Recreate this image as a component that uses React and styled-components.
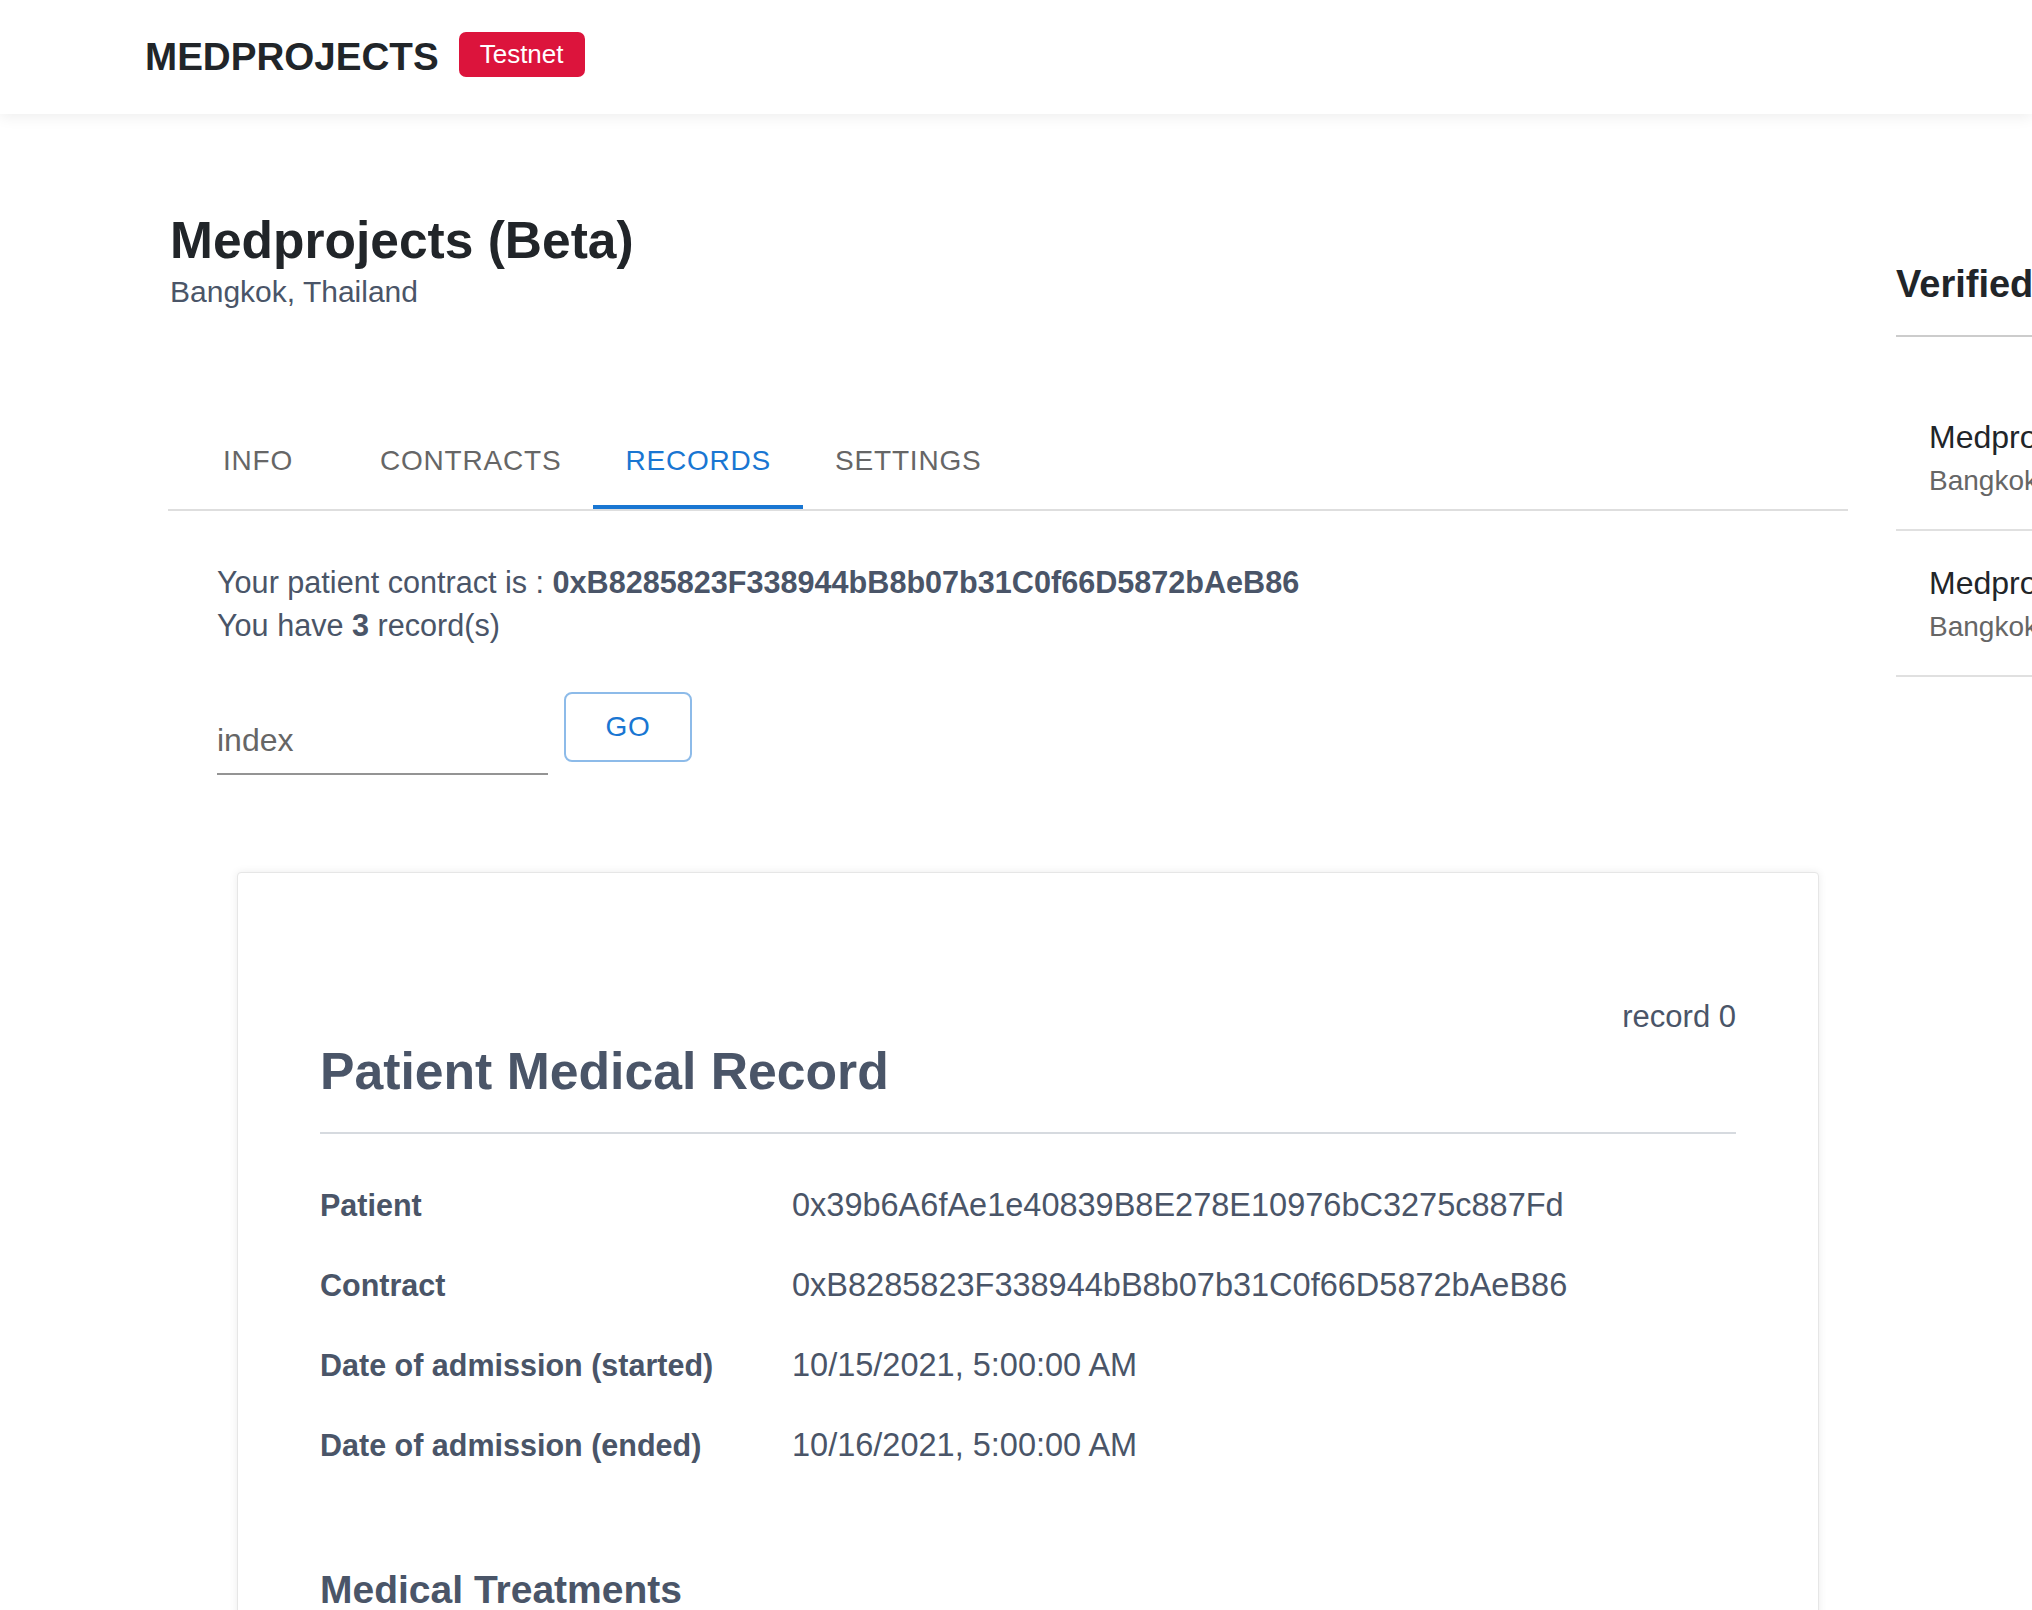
import React from "react";
import styled, { createGlobalStyle } from "styled-components";

const GlobalStyle = createGlobalStyle`
  html, body {
    margin: 0;
    padding: 0;
    background: #ffffff;
    overflow-x: hidden;
  }
  body {
    font-family: "Liberation Sans", Arial, Helvetica, sans-serif;
    color: #212529;
  }
  * { box-sizing: border-box; }
`;

const Header = styled.header`
  height: 114px;
  display: flex;
  align-items: center;
  gap: 20px;
  padding-left: 145px;
  background: #fff;
  box-shadow: 0 3px 14px rgba(0, 0, 0, 0.07);
  position: relative;
  z-index: 2;
`;

const Logo = styled.div`
  font-size: 38.6px;
  font-weight: 700;
  color: #212529;
  line-height: 1;
`;

const Badge = styled.span`
  display: inline-flex;
  align-items: center;
  height: 45px;
  margin-top: -6px;
  padding: 0 21px;
  border-radius: 7px;
  background: #dc143c;
  color: #fff;
  font-size: 26px;
  line-height: 1;
`;

const Main = styled.div`
  display: flex;
  gap: 48px;
  padding-left: 168px;
  width: max-content;
`;

const LeftColumn = styled.div`
  width: 1680px;
  flex-shrink: 0;
`;

const TitleBlock = styled.div`
  margin-top: 96px;
  padding-left: 2px;
`;

const Title = styled.h1`
  margin: 0;
  font-size: 51.5px;
  line-height: 60px;
  font-weight: 700;
  color: #212529;
`;

const Subtitle = styled.div`
  font-size: 30px;
  line-height: 43px;
  color: #4a5568;
`;

const TabBar = styled.div`
  margin-top: 100px;
  display: flex;
  border-bottom: 2px solid #dedede;
`;

const Tab = styled.div`
  position: relative;
  min-width: 180px;
  height: 96px;
  padding: 0 32px;
  display: flex;
  align-items: center;
  justify-content: center;
  font-size: 28px;
  letter-spacing: 0.8px;
  text-transform: uppercase;
  color: ${(p) => (p.$active ? "#1976d2" : "#666666")};

  &::after {
    content: "";
    position: absolute;
    left: 0;
    right: 0;
    bottom: 0;
    height: 4px;
    background: ${(p) => (p.$active ? "#1976d2" : "transparent")};
  }
`;

const Panel = styled.div`
  padding: 50px 0 0 49px;
`;

const InfoLine = styled.div`
  font-size: 30.6px;
  line-height: 43px;
  color: #4a5568;

  b {
    font-weight: 700;
  }
`;

const FormRow = styled.div`
  margin-top: 45px;
  display: flex;
  align-items: flex-start;
  gap: 16px;
`;

const IndexInput = styled.input`
  margin-top: 25px;
  width: 331px;
  height: 58px;
  padding: 0 0 10px;
  border: none;
  border-bottom: 2px solid #949494;
  outline: none;
  background: transparent;
  font-family: "Liberation Sans", Arial, sans-serif;
  font-size: 32px;
  line-height: 46px;
  color: #333;

  &::placeholder {
    color: #666666;
    opacity: 1;
  }
`;

const GoButton = styled.button`
  width: 128px;
  height: 70px;
  border: 2px solid #8dbbe9;
  border-radius: 8px;
  background: #fff;
  color: #1976d2;
  font-family: "Liberation Sans", Arial, sans-serif;
  font-size: 28px;
  letter-spacing: 0.8px;
  cursor: pointer;
`;

const Card = styled.div`
  margin: 97px 0 0 20px;
  width: 1582px;
  padding: 122px 82px 200px;
  background: #fff;
  border: 1px solid #e6e6e6;
  border-radius: 4px;
  box-shadow: 0 0 8px rgba(0, 0, 0, 0.08);
`;

const RecordTag = styled.div`
  text-align: right;
  font-size: 31px;
  line-height: 44px;
  color: #4a5568;
`;

const CardTitle = styled.h2`
  margin: 2px 0 0;
  font-size: 51.7px;
  line-height: 60px;
  font-weight: 700;
  color: #4a5568;
`;

const Divider = styled.div`
  margin-top: 31px;
  height: 2px;
  background: #d6dadf;
`;

const Fields = styled.div`
  margin-top: 31px;
`;

const FieldRow = styled.div`
  display: grid;
  grid-template-columns: 472px 1fr;
  align-items: center;
  height: 80px;
  line-height: 46px;
  color: #4a5568;
`;

const FieldLabel = styled.div`
  font-size: 30.5px;
  font-weight: 700;
`;

const FieldValue = styled.div`
  font-size: 32.5px;
`;

const SectionTitle = styled.h3`
  margin: 81px 0 0;
  font-size: 39px;
  line-height: 47px;
  font-weight: 700;
  color: #4a5568;
`;

const Sidebar = styled.aside`
  width: 520px;
  flex-shrink: 0;
  padding-top: 147px;
`;

const SideHeading = styled.h2`
  margin: 0;
  padding-bottom: 28px;
  border-bottom: 2px solid #cccccc;
  font-size: 38px;
  line-height: 46px;
  font-weight: 700;
  color: #212529;
  white-space: nowrap;
`;

const SideList = styled.div`
  margin-top: 48px;
`;

const SideItem = styled.div`
  padding: 28px 33px 28px;
  border-bottom: 2px solid #e0e0e0;
  white-space: nowrap;
`;

const SidePrimary = styled.div`
  font-size: 32px;
  line-height: 48px;
  color: #212529;
`;

const SideSecondary = styled.div`
  font-size: 28px;
  line-height: 40px;
  color: #666666;
`;

const tabs = ["Info", "Contracts", "Records", "Settings"];

const fields = [
  ["Patient", "0x39b6A6fAe1e40839B8E278E10976bC3275c887Fd"],
  ["Contract", "0xB8285823F338944bB8b07b31C0f66D5872bAeB86"],
  ["Date of admission (started)", "10/15/2021, 5:00:00 AM"],
  ["Date of admission (ended)", "10/16/2021, 5:00:00 AM"],
];

const hospitals = [
  { name: "Medprojects (Beta)", place: "Bangkok, Thailand" },
  { name: "Medprojects Hospital", place: "Bangkok, Thailand" },
];

export default function App() {
  return (
    <>
      <GlobalStyle />
      <Header>
        <Logo>MEDPROJECTS</Logo>
        <Badge>Testnet</Badge>
      </Header>
      <Main>
        <LeftColumn>
          <TitleBlock>
            <Title>Medprojects (Beta)</Title>
            <Subtitle>Bangkok, Thailand</Subtitle>
          </TitleBlock>
          <TabBar>
            {tabs.map((t) => (
              <Tab key={t} $active={t === "Records"}>
                {t}
              </Tab>
            ))}
          </TabBar>
          <Panel>
            <InfoLine>
              Your patient contract is : <b>0xB8285823F338944bB8b07b31C0f66D5872bAeB86</b>
            </InfoLine>
            <InfoLine>
              You have <b>3</b> record(s)
            </InfoLine>
            <FormRow>
              <IndexInput placeholder="index" />
              <GoButton>GO</GoButton>
            </FormRow>
            <Card>
              <RecordTag>record 0</RecordTag>
              <CardTitle>Patient Medical Record</CardTitle>
              <Divider />
              <Fields>
                {fields.map(([label, value]) => (
                  <FieldRow key={label}>
                    <FieldLabel>{label}</FieldLabel>
                    <FieldValue>{value}</FieldValue>
                  </FieldRow>
                ))}
              </Fields>
              <SectionTitle>Medical Treatments</SectionTitle>
            </Card>
          </Panel>
        </LeftColumn>
        <Sidebar>
          <SideHeading>Verified Hospitals</SideHeading>
          <SideList>
            {hospitals.map((h) => (
              <SideItem key={h.name}>
                <SidePrimary>{h.name}</SidePrimary>
                <SideSecondary>{h.place}</SideSecondary>
              </SideItem>
            ))}
          </SideList>
        </Sidebar>
      </Main>
    </>
  );
}
